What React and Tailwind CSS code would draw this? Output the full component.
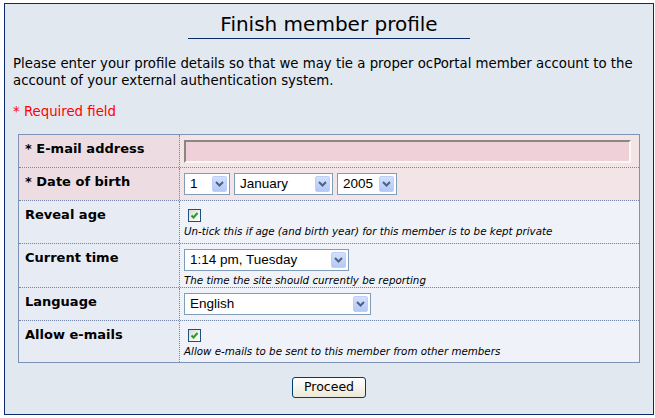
import React from "react";

const VERD = { fontFamily: '"DejaVu Sans", Verdana, sans-serif' };

function Chevron() {
  return (
    <svg width="9" height="6" viewBox="0 0 9 6" className="block">
      <path d="M1 1 L4.5 4.5 L8 1" fill="none" stroke="#4d6185" strokeWidth="2" />
    </svg>
  );
}

function Select({ className, value }) {
  return (
    <div
      className={
        "flex h-[22px] items-center justify-between border border-[#7f9db9] bg-white pl-[5px] text-[13.5px] text-black " +
        className
      }
      style={{ fontFamily: '"Liberation Sans", Arial, sans-serif' }}
    >
      <span className="leading-none">{value}</span>
      <div className="mr-[2px] flex h-[16px] w-[15px] items-center justify-center rounded-[2px] border border-[#bccffa] bg-gradient-to-b from-[#d3e0fd] to-[#b4c8f6]">
        <Chevron />
      </div>
    </div>
  );
}

function Check() {
  return (
    <div className="ml-[4px] mt-[3px] flex h-[13px] w-[13px] items-center justify-center border border-[#1c5180] bg-gradient-to-br from-[#dcdcd5] to-white">
      <svg width="9" height="9" viewBox="0 0 9 9" className="block">
        <path d="M1.5 4.5 L3.5 6.5 L7.5 2" fill="none" stroke="#21a121" strokeWidth="2" />
      </svg>
    </div>
  );
}

function Help({ children }) {
  return (
    <div className="mt-[3px] whitespace-nowrap text-[10.3px] italic leading-[12px] text-black" style={VERD}>
      {children}
    </div>
  );
}

function Row({ label, required, h, last, children }) {
  return (
    <div
      className={
        "flex " +
        h +
        (last ? "" : " border-b border-dotted border-[#7586a8]")
      }
    >
      <div
        className={
          "w-[161px] shrink-0 border-r border-dotted border-[#7586a8] pl-[6px] pt-[6px] text-[13px] font-bold leading-[16px] text-black " +
          (required ? "bg-[#eddde3]" : "bg-[#e7ebf3]")
        }
        style={VERD}
      >
        {label}
      </div>
      <div
        className={
          "flex-1 px-[4px] pt-[5px] " + (required ? "bg-[#f3e4e8]" : "bg-[#eff2f8]")
        }
      >
        {children}
      </div>
    </div>
  );
}

export default function App() {
  return (
    <div className="min-h-[418px] bg-white pl-[4px] pt-[3px]">
      <div
        className="flex h-[412px] w-[650px] flex-col border border-[#0c2a6b] bg-[#e1e8f0]"
        style={VERD}
      >
        <div className="mt-[8px] flex justify-center">
          <h1 className="border-b border-[#0c2a6b] px-[32px] pb-[2px] text-[20px] font-normal leading-[24px] text-black">
            Finish member profile
          </h1>
        </div>
        <p className="mt-[16px] pl-[8px] pr-[6px] text-[13.3px] leading-[17px] text-black">
          Please enter your profile details so that we may tie a proper ocPortal member account to the account of your external authentication system.
        </p>
        <p className="mt-[14px] pl-[8px] text-[13.3px] leading-[17px] text-[#ff0000]">
          * Required field
        </p>
        <div className="mx-[13px] mt-[14px] border border-[#7e92b5]">
          <Row label="* E-mail address" required h="h-[33px]">
            <div className="h-[23px] w-[447px] border-2 border-b-[#fbf8f2] border-l-[#8a8680] border-r-[#fbf8f2] border-t-[#8a8680] bg-[#f0d0d8]" />
          </Row>
          <Row label="* Date of birth" required h="h-[33px]">
            <div className="flex gap-[4px]">
              <Select className="w-[46px]" value="1" />
              <Select className="w-[99px]" value="January" />
              <Select className="w-[60px]" value="2005" />
            </div>
          </Row>
          <Row label="Reveal age" h="h-[43px]">
            <Check />
            <Help>Un-tick this if age (and birth year) for this member is to be kept private</Help>
          </Row>
          <Row label="Current time" h="h-[44px]">
            <Select className="w-[165px]" value="1:14 pm, Tuesday" />
            <Help>The time the site should currently be reporting</Help>
          </Row>
          <Row label="Language" h="h-[33px]">
            <Select className="w-[187px]" value="English" />
          </Row>
          <Row label="Allow e-mails" h="h-[41px]" last>
            <Check />
            <Help>Allow e-mails to be sent to this member from other members</Help>
          </Row>
        </div>
        <div className="mt-[14px] flex justify-center">
          <button
            className="flex h-[21px] w-[74px] items-center justify-center rounded-[3px] border border-[#003c74] bg-gradient-to-b from-white to-[#ece9d8] text-[12.5px] text-black"
            style={VERD}
          >
            Proceed
          </button>
        </div>
      </div>
    </div>
  );
}
